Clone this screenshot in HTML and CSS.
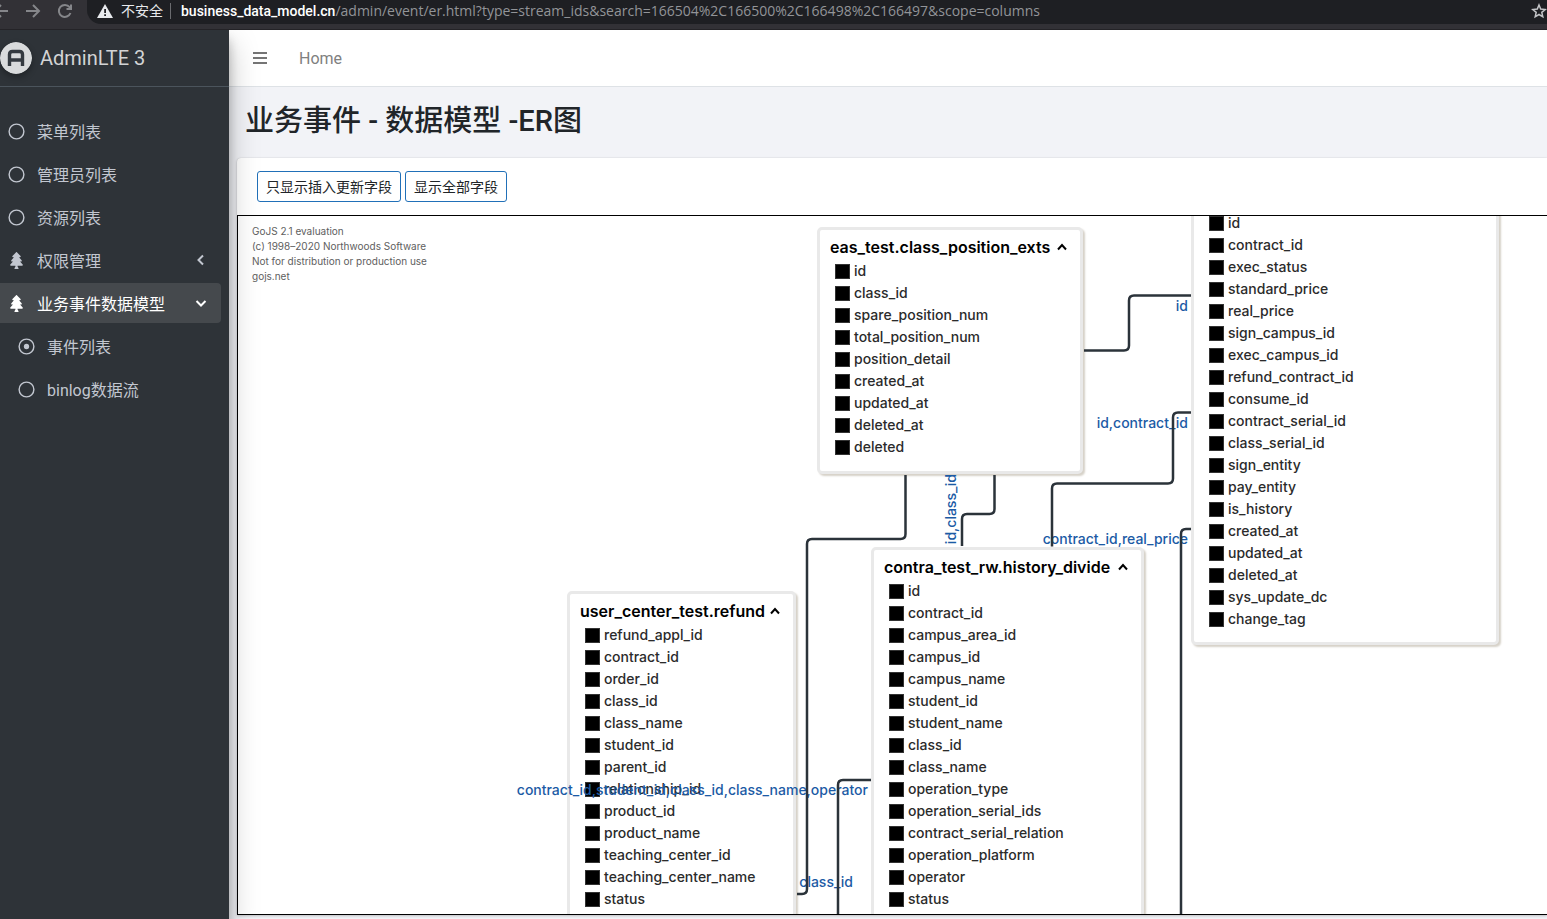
FILE: index.html
```html
<!DOCTYPE html>
<html lang="zh-CN">
<head>
<meta charset="utf-8">
<title>业务事件 - 数据模型 -ER图</title>
<link rel="stylesheet" href="styles.css">
</head>
<body>
<div class="browser-bar">
  <button class="bar-button" type="button" aria-label="后退"><svg width="16" height="16" viewBox="0 0 16 16"><path d="M15 8H2M8 2 2 8l6 6"/></svg></button>
  <button class="bar-button" type="button" aria-label="前进"><svg width="16" height="16" viewBox="0 0 16 16"><path d="M1 8h13M8 2l6 6-6 6"/></svg></button>
  <button class="bar-button" type="button" aria-label="刷新"><svg width="16" height="16" viewBox="0 0 16 16"><path d="M13.500 10A6 6 0 1 1 12.600 4.200L14 6M14 1.500V6H9.500"/></svg></button>
  <div class="address">
    <svg class="address-warning" width="16" height="14" viewBox="0 0 16 14"><path fill="#e8eaed" d="M8 0 16 14H0z"/><path fill="#1e1f23" d="M7.200 5h1.800v4H7.200zM7.200 10.200h1.800V12H7.200z"/></svg>
    <span class="address-state">不安全</span>
    <span class="address-url"><span class="address-host">business_data_model.cn</span>/admin/event/er.html?type=stream_ids&amp;search=166504%2C166500%2C166498%2C166497&amp;scope=columns</span>
    <button class="bar-button address-star" type="button" aria-label="收藏"><svg width="16" height="16" viewBox="0 0 16 16"><path d="M8 2l1.700 4.100 4.500.4-3.400 2.900 1 4.400L8 11.500l-3.800 2.300 1-4.400L1.800 6.500l4.500-.4z"/></svg></button>
  </div>
</div>

<div class="app">
  <aside class="sidebar">
    <a class="brand" href="#">
      <svg class="brand-logo" width="32" height="32" viewBox="0 0 32 32"><circle cx="16" cy="16" r="16" fill="#d9dbdc"/><path d="M9.500 24V12.500q0-3 3-3h7q3 0 3 3V24M9.500 18h13" fill="none" stroke="#343a40" stroke-width="3.400"/></svg>
      <span>AdminLTE 3</span>
    </a>
    <nav class="menu">
      <a class="menu-item" href="#"><svg class="menu-icon" viewBox="0 0 18 18"><circle cx="9" cy="9" r="7.800"/></svg><span>菜单列表</span></a>
      <a class="menu-item" href="#"><svg class="menu-icon" viewBox="0 0 18 18"><circle cx="9" cy="9" r="7.800"/></svg><span>管理员列表</span></a>
      <a class="menu-item" href="#"><svg class="menu-icon" viewBox="0 0 18 18"><circle cx="9" cy="9" r="7.800"/></svg><span>资源列表</span></a>
      <a class="menu-item" href="#"><svg class="menu-icon menu-icon-solid" viewBox="0 0 384 512"><use href="#tree"/></svg><span>权限管理</span><svg class="menu-arrow" viewBox="0 0 12 12"><path d="M8 1.500 3.500 6 8 10.500"/></svg></a>
      <a class="menu-item menu-item-active" href="#"><svg class="menu-icon menu-icon-solid" viewBox="0 0 384 512"><path id="tree" d="M378.310 378.490L298.420 288h30.630c9.010 0 16.980-5 20.780-13.060 3.800-8.040 2.550-17.260-3.280-24.050L268.420 160h28.890c9.100 0 17.300-5.350 20.860-13.610 3.520-8.130 1.860-17.590-4.240-24.080L203.660 4.830c-6.030-6.450-17.280-6.450-23.320 0L70.060 122.310c-6.100 6.490-7.750 15.950-4.240 24.080C69.380 154.650 77.590 160 86.690 160h28.890l-78.140 90.910c-5.810 6.780-7.060 15.990-3.270 24.040C37.970 283 45.930 288 54.950 288h30.630L5.690 378.490c-6 6.790-7.360 16.090-3.560 24.260C5.860 410.870 14.050 416 23.240 416H160v24.450l-30.290 48.400c-5.320 10.640 2.420 23.160 14.310 23.160h95.960c11.890 0 19.630-12.520 14.310-23.160L224 440.450V416h136.760c9.190 0 17.380-5.130 21.110-13.250 3.800-8.170 2.440-17.470-3.560-24.260z"/></svg><span>业务事件数据模型</span><svg class="menu-arrow" viewBox="0 0 12 12"><path d="M1.500 4 6 8.500 10.500 4"/></svg></a>
      <div class="submenu">
        <a class="menu-item" href="#"><svg class="menu-icon" viewBox="0 0 18 18"><circle cx="9" cy="9" r="7.800"/><circle class="menu-dot" cx="9" cy="9" r="2.800"/></svg><span>事件列表</span></a>
        <a class="menu-item" href="#"><svg class="menu-icon" viewBox="0 0 18 18"><circle cx="9" cy="9" r="7.800"/></svg><span>binlog数据流</span></a>
      </div>
    </nav>
  </aside>

  <main class="content">
    <header class="topbar">
      <button class="topbar-toggle" type="button" aria-label="菜单"><svg width="14" height="14" viewBox="0 0 14 14"><path d="M0 2h14M0 7h14M0 12h14"/></svg></button>
      <a class="topbar-link" href="#">Home</a>
    </header>
    <h1 class="page-title">业务事件 - 数据模型 -ER图</h1>
    <section class="card">
      <div class="card-actions">
        <button class="action" type="button">只显示插入更新字段</button>
        <button class="action" type="button">显示全部字段</button>
      </div>
      <div class="diagram">
        <p class="watermark">GoJS 2.1 evaluation<br>(c) 1998–2020 Northwoods Software<br>Not for distribution or production use<br>gojs.net</p>

        <article class="entity entity-position">
          <header class="entity-head"><h2>eas_test.class_position_exts</h2><button class="collapse" type="button" aria-label="折叠"><svg width="10" height="8" viewBox="0 0 10 8"><path d="M1 6.500 5 2l4 4.500"/></svg></button></header>
          <ul class="fields"><li>id</li><li>class_id</li><li>spare_position_num</li><li>total_position_num</li><li>position_detail</li><li>created_at</li><li>updated_at</li><li>deleted_at</li><li>deleted</li></ul>
        </article>

        <article class="entity entity-contract">
          <ul class="fields"><li>id</li><li>contract_id</li><li>exec_status</li><li>standard_price</li><li>real_price</li><li>sign_campus_id</li><li>exec_campus_id</li><li>refund_contract_id</li><li>consume_id</li><li>contract_serial_id</li><li>class_serial_id</li><li>sign_entity</li><li>pay_entity</li><li>is_history</li><li>created_at</li><li>updated_at</li><li>deleted_at</li><li>sys_update_dc</li><li>change_tag</li></ul>
        </article>

        <article class="entity entity-history">
          <header class="entity-head"><h2>contra_test_rw.history_divide</h2><button class="collapse" type="button" aria-label="折叠"><svg width="10" height="8" viewBox="0 0 10 8"><path d="M1 6.500 5 2l4 4.500"/></svg></button></header>
          <ul class="fields"><li>id</li><li>contract_id</li><li>campus_area_id</li><li>campus_id</li><li>campus_name</li><li>student_id</li><li>student_name</li><li>class_id</li><li>class_name</li><li>operation_type</li><li>operation_serial_ids</li><li>contract_serial_relation</li><li>operation_platform</li><li>operator</li><li>status</li></ul>
        </article>

        <article class="entity entity-refund">
          <header class="entity-head"><h2>user_center_test.refund</h2><button class="collapse" type="button" aria-label="折叠"><svg width="10" height="8" viewBox="0 0 10 8"><path d="M1 6.500 5 2l4 4.500"/></svg></button></header>
          <ul class="fields"><li>refund_appl_id</li><li>contract_id</li><li>order_id</li><li>class_id</li><li>class_name</li><li>student_id</li><li>parent_id</li><li>relationship_id</li><li>product_id</li><li>product_name</li><li>teaching_center_id</li><li>teaching_center_name</li><li>status</li></ul>
        </article>

        <svg class="links">
          <g transform="translate(-238 -216)">
            <g class="link-labels">
              <text x="1188" y="311">id</text>
              <text x="1188" y="428">id,contract_id</text>
              <text x="1188" y="544">contract_id,real_price</text>
              <text x="868" y="795">contract_id,student_id,class_id,class_name,operator</text>
              <text x="853" y="887">class_id</text>
              <text transform="translate(956 474) rotate(-90)">id,class_id</text>
            </g>
            <path d="M1084 350.500h40q5 0 5-5v-45q0-5 5-5h57"/>
            <path d="M1191 412.500h-13q-5 0-5 5v61q0 5-5 5h-111q-5 0-5 5v58"/>
            <path d="M905.500 475v59q0 5-5 5h-88.500q-5 0-5 5v345q0 5-5 5h-5"/>
            <path d="M994.500 475v34q0 5-5 5h-22.500q-5 0-5 5v27"/>
            <path d="M1191 529h-5q-5 0-5 5v400"/>
            <path d="M871 780h-28q-5 0-5 5v150"/>
          </g>
        </svg>
      </div>
    </section>
  </main>
</div>
</body>
</html>
```
FILE: styles.css
```css
*, *::before { box-sizing: border-box; }

body {
  margin: 0;
  height: 100vh;
  overflow: hidden;
  display: flex;
  flex-direction: column;
  font-family: Roboto, "Noto Sans CJK SC", sans-serif;
  font-size: 16px;
  color: #212529;
}

button {
  padding: 0;
  border: 0;
  background: none;
  font: inherit;
  color: inherit;
}

a { color: inherit; text-decoration: none; }
svg { display: block; }

/* Browser bar */
.browser-bar {
  position: relative;
  z-index: 3;
  flex: none;
  height: 30px;
  padding-bottom: 5px;
  display: flex;
  align-items: stretch;
  background: #323136;
  border-bottom: 1px solid #242327;
}

.bar-button {
  flex: none;
  width: 32px;
  padding-bottom: 2px;
  display: flex;
  align-items: center;
  justify-content: center;
}

.bar-button:first-child { width: 17px; margin-left: -8px; margin-right: 8px; }
.bar-button svg { fill: none; stroke: #85868a; stroke-width: 2; }

.address {
  flex: 1;
  min-width: 0;
  margin-left: 6px;
  padding-left: 10px;
  padding-bottom: 2px;
  display: flex;
  align-items: center;
  background: #1e1f23;
  border-bottom-left-radius: 14px;
  font-size: 14px;
  color: #929498;
  white-space: nowrap;
}

.address-state {
  margin: 0 10px 0 8px;
  padding-right: 7px;
  border-right: 1px solid #6a6b6f;
  line-height: 16px;
  color: #e8eaed;
}

.address-url { flex: 1; min-width: 0; padding-bottom: 2px; overflow: hidden; font-family: "Open Sans", sans-serif; }
.address-host { font-family: Roboto, sans-serif; font-weight: 500; color: #fff; }
.address-star { width: 16px; padding: 0; }
.address-star svg { stroke: #c4c5c8; stroke-width: 1.5; }

/* Layout */
.app { flex: 1; min-height: 0; display: flex; }

.sidebar {
  position: relative;
  z-index: 2;
  flex: none;
  width: 229px;
  background: #2e3338;
  color: #c2c7d0;
  box-shadow: 0 14px 28px rgba(0, 0, 0, .25), 0 10px 10px rgba(0, 0, 0, .22);
}

.brand {
  height: 57px;
  display: flex;
  align-items: center;
  gap: 8px;
  border-bottom: 1px solid #4b545c;
  font-size: 20px;
  font-weight: 400;
  color: #d3d4d5;
}

.brand-logo { border-radius: 50%; box-shadow: 0 3px 6px rgba(0, 0, 0, .3); }

.menu {
  padding: 24px 8px 0 0;
  display: flex;
  flex-direction: column;
  gap: 3px;
}

.submenu {
  padding-left: 10px;
  display: flex;
  flex-direction: column;
  gap: 3px;
}

.menu-item {
  height: 40px;
  padding: 0 14px 0 8px;
  display: flex;
  align-items: center;
  gap: 12px;
  border-radius: 4px;
}

.menu-item-active { margin-left: -4px; padding-left: 12px; background: #45494d; color: #fff; }
.menu-icon { width: 17px; height: 17px; fill: none; stroke: currentColor; stroke-width: 1.500; }
.menu-dot { fill: currentColor; stroke: none; }
.menu-icon-solid { fill: currentColor; stroke: none; }
.menu-arrow { width: 12px; height: 12px; margin-left: auto; fill: none; stroke: currentColor; stroke-width: 2; }

.content {
  flex: 1;
  min-width: 0;
  display: flex;
  flex-direction: column;
  background: #f2f3f7;
}

.topbar {
  flex: none;
  height: 57px;
  padding-left: 24px;
  display: flex;
  align-items: center;
  gap: 32px;
  background: #fff;
  border-bottom: 1px solid #dee2e6;
  color: #808080;
}

.topbar-toggle svg { stroke: #757575; stroke-width: 2; }

.page-title {
  margin: 0;
  padding: 14px 16px 16px;
  font-size: 29px;
  font-weight: 500;
  line-height: 41px;
}

/* Card with the diagram */
.card {
  flex: 1;
  min-height: 0;
  margin-left: 8px;
  margin-bottom: 4px;
  display: flex;
  flex-direction: column;
  background: #fff;
  border-top-left-radius: 4px;
  box-shadow: 0 0 1px rgba(0, 0, 0, .2), 0 1px 3px rgba(0, 0, 0, .2);
}

.card-actions { padding: 13px 20px; display: flex; gap: 4px; }

.action {
  height: 31px;
  padding: 0 8px 2px;
  border: 1px solid #2170b8;
  border-radius: 3px;
  font-size: 14px;
}

.diagram {
  position: relative;
  flex: 1;
  min-height: 0;
  overflow: hidden;
  border: 1px solid #000;
  border-right: 0;
  font-family: Inter, "Liberation Sans", sans-serif;
}

.watermark {
  margin: 0;
  padding: 8px 14px;
  font-size: 10px;
  line-height: 15px;
  color: #606060;
}

.entity {
  position: absolute;
  background: #fff;
  border: 3px solid #e9e9e9;
  border-radius: 5px;
  box-shadow: 2px 2px 2px #d6d1c8;
}

.entity-position { left: 579px; top: 11px; width: 266px; padding-bottom: 13px; }
.entity-contract { left: 953px; top: -7px; width: 308px; padding-bottom: 12px; }
.entity-history { left: 633px; top: 331px; width: 273px; bottom: -12px; }
.entity-refund { left: 329px; top: 375px; width: 229px; bottom: -12px; }

.entity-head {
  padding: 6px 13px 2px 10px;
  display: flex;
  align-items: center;
  justify-content: space-between;
  color: #000;
}

.entity-head h2 { margin: 0; font-size: 16px; font-weight: 600; line-height: 22px; white-space: nowrap; }
.collapse svg { fill: none; stroke: #000; stroke-width: 2; }

.fields { margin: 0; padding: 0 0 0 15px; list-style: none; }

.fields li {
  height: 22px;
  display: flex;
  align-items: center;
  gap: 4px;
  font-size: 14px;
  font-weight: 500;
  line-height: 20px;
  color: #2b2b2b;
}

.fields li::before { content: ""; width: 15px; height: 15px; background: #000; border: 1px solid #333; }

.links {
  position: absolute;
  inset: 0;
  width: 100%;
  height: 100%;
  pointer-events: none;
}

.links path { fill: none; stroke: #2b333a; stroke-width: 2.500; }
.link-labels { font-size: 14px; font-weight: 500; fill: #1c5ba5; text-anchor: end; }
```
